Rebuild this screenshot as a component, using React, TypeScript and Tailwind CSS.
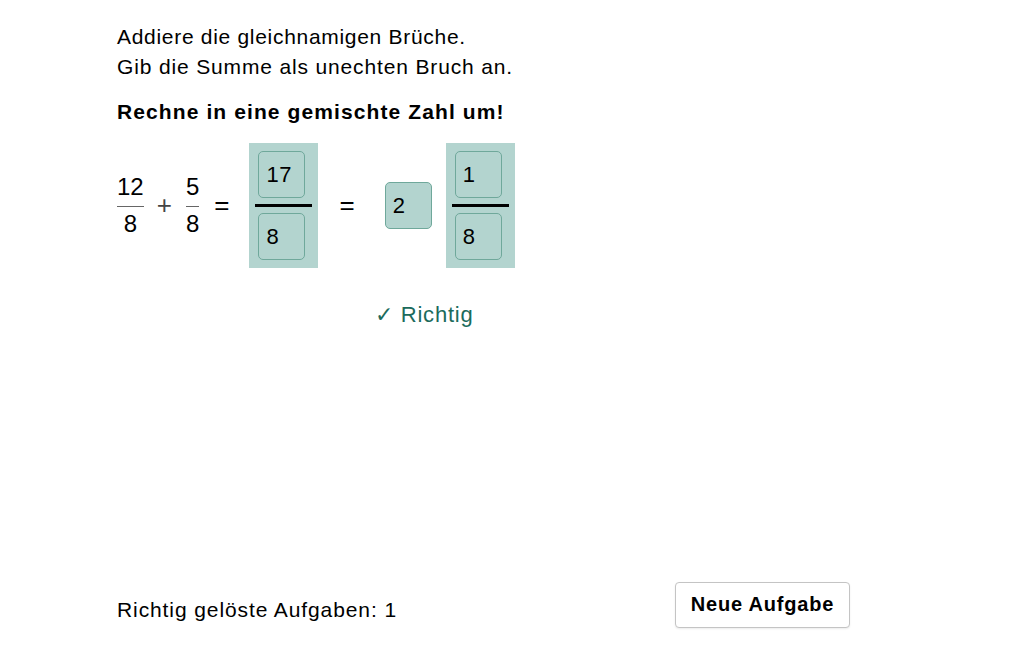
import React from 'react';

const font = { fontFamily: '"Liberation Sans", Arial, sans-serif' };

function InputBox({ value }: { value: string }) {
  return (
    <div className="flex h-[47px] w-[47px] items-center rounded-[5px] border border-[#6fa89b] bg-[#b3d4cf] pl-[7px] text-[22px] tracking-[0.5px] text-black">
      {value}
    </div>
  );
}

function StaticFraction({ num, den }: { num: string; den: string }) {
  return (
    <div className="flex flex-col items-stretch text-[24px] leading-none">
      <span className="text-center">{num}</span>
      <span className="mb-[5px] mt-[7px] h-px bg-[#666]" />
      <span className="text-center">{den}</span>
    </div>
  );
}

function InputFraction({ num, den }: { num: string; den: string }) {
  return (
    <div className="flex h-[125px] w-[69px] flex-col justify-between bg-[#b3d4cf] py-[8px]">
      <div className="pl-[9px]">
        <InputBox value={num} />
      </div>
      <div className="mx-[6px] h-[3px] bg-black" />
      <div className="pl-[9px]">
        <InputBox value={den} />
      </div>
    </div>
  );
}

export default function App() {
  return (
    <div className="h-[645px] w-[1032px] bg-white text-black" style={font}>
      <div className="flex h-full flex-col pl-[117px] pt-[22px]">
        <p className="text-[21px] leading-[30px] tracking-[0.7px]">Addiere die gleichnamigen Brüche.</p>
        <p className="text-[21px] leading-[30px] tracking-[0.85px]">Gib die Summe als unechten Bruch an.</p>
        <p className="mt-[15px] text-[21px] font-bold leading-[30px] tracking-[1.1px]">Rechne in eine gemischte Zahl um!</p>

        <div className="mt-[16px] flex items-center">
          <StaticFraction num="12" den="8" />
          <span className="ml-[13px] text-[26px] font-light text-[#444]">+</span>
          <div className="ml-[14px]">
            <StaticFraction num="5" den="8" />
          </div>
          <span className="ml-[15px] text-[26px]">=</span>
          <div className="ml-[20px]">
            <InputFraction num="17" den="8" />
          </div>
          <span className="ml-[21px] text-[26px]">=</span>
          <div className="ml-[30px]">
            <InputBox value="2" />
          </div>
          <div className="ml-[14px]">
            <InputFraction num="1" den="8" />
          </div>
        </div>

        <div className="mt-[30px] pl-[258px] text-[22px] tracking-[0.8px] text-[#1b6b5c]">✓ Richtig</div>

        <div className="mt-auto mb-[17px] flex items-end">
          <span className="mb-[3px] text-[21px] tracking-[0.9px]">Richtig gelöste Aufgaben: 1</span>
          <button className="ml-auto mr-[182px] h-[46px] w-[175px] rounded-[4px] border border-[#c4c4c4] bg-white pb-[3px] text-[20px] font-bold tracking-[0.8px] shadow-[0_1px_2px_rgba(0,0,0,0.08)]">
            Neue Aufgabe
          </button>
        </div>
      </div>
    </div>
  );
}
